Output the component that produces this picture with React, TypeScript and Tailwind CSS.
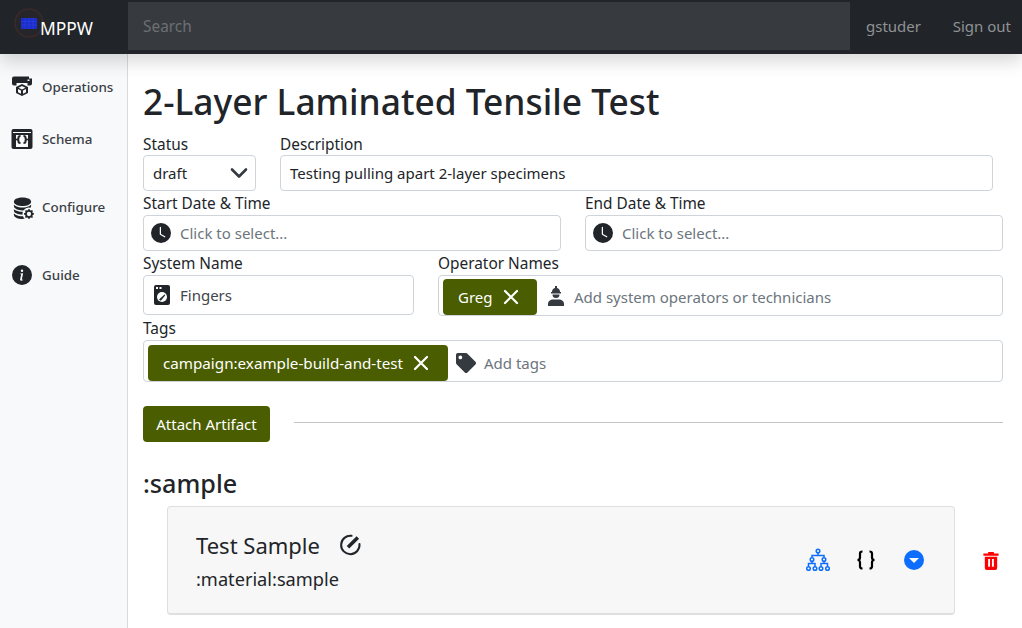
import { BsClockFill, BsDatabaseFillGear, BsInfoCircleFill } from "react-icons/bs";
import { FaTag } from "react-icons/fa";

const font = "font-['Noto_Sans',sans-serif]";
const labelCls = "block text-[15.4px] leading-[17px] text-[#212529]";
const boxCls = "flex items-center bg-white border border-[#ced4da] rounded-[4px]";

const LogoIcon = () => (
  <svg viewBox="0 0 30 30" className="w-[30px] h-[30px]">
    <circle cx="15" cy="15" r="14" fill="#26262a" stroke="#3a2a2a" strokeWidth="1.500" />
    <rect x="7" y="10" width="16" height="11" fill="#1c2ec9" />
    <path d="M7 13.500h16M7 17h16M11 10v11M15 10v11M19 10v11" stroke="#2b3fe0" strokeWidth="0.600" />
  </svg>
);

const OperationsIcon = () => (
  <svg viewBox="0 1.500 22 22" className="w-[22px] h-[22px]" fill="#212529">
    <path d="M1 4a2 2 0 0 1 2-2h15v2h3v5a2 2 0 0 1-2 2h-2.500v-2.500h-11v2.500H3a2 2 0 0 1-2-2z" />
    <rect x="16.500" y="5" width="2" height="1.500" fill="#f8f9fa" />
    <path d="M11 9.500l6 3v6l-6 3-6-3v-6z" />
    <path d="M11 11.500l3.500 1.700-3.500 1.800-3.500-1.800zM7 14.500l3 1.500v3.300l-3-1.500zM15 14.500l-3 1.500v3.300l3-1.500z" fill="#f8f9fa" />
  </svg>
);

const SchemaIcon = () => (
  <svg viewBox="0 0 22 22" className="w-[22px] h-[22px]">
    <rect x="0.500" y="1" width="21" height="20" rx="2" fill="#212529" />
    <rect x="2" y="4" width="18" height="1" fill="#f8f9fa" />
    <rect x="5" y="7" width="12" height="12" fill="#f8f9fa" />
    <path d="M9.500 8c-1.500 0-2 .5-2 1.500v.8c0 .7-.4 1-1 1.200.6.200 1 .5 1 1.200v.8c0 1 .5 1.500 2 1.500M12.500 8c1.500 0 2 .5 2 1.500v.8c0 .7.4 1 1 1.200-.6.200-1 .5-1 1.200v.8c0 1-.5 1.500-2 1.500" fill="none" stroke="#212529" strokeWidth="2" />
  </svg>
);

const ChevronIcon = () => (
  <svg viewBox="0 0 18 12" className="w-[18px] h-3" fill="none" stroke="#343a40" strokeWidth="2.600" strokeLinecap="round" strokeLinejoin="round">
    <path d="M2 2.500l7 7 7-7" />
  </svg>
);

const WasherIcon = () => (
  <svg viewBox="0 0 16 20" className="w-4 h-5">
    <rect x="0" y="0" width="16" height="20" rx="2" fill="#212529" />
    <rect x="2" y="2" width="2" height="2" fill="#fff" />
    <rect x="5.500" y="2" width="2" height="2" fill="#fff" />
    <circle cx="8" cy="12" r="5" fill="#fff" />
    <path d="M5 14.500l5.500-5 .8.800-4.500 5.500z" fill="#212529" />
  </svg>
);

const WorkerIcon = () => (
  <svg viewBox="0 0 18 20" className="w-[18px] h-5" fill="#343a40">
    <path d="M8 0h2v2c2 .5 3 2 3 4h1v1.500H4V6h1c0-2 1-3.500 3-4z" />
    <path d="M5.500 8.500h7a3.500 3.500 0 0 1-7 0z" />
    <path d="M1 20v-2c0-3 2.500-4.500 5-4.500h6c2.500 0 5 1.500 5 4.500v2z" />
  </svg>
);

const EditIcon = () => (
  <svg viewBox="0 0 22 22" className="w-[23px] h-[23px]" fill="none" stroke="#212529">
    <path d="M12 2.700A8.800 8.800 0 1 0 19.600 10.500" strokeWidth="1.900" strokeLinecap="round" />
    <path d="M8.600 13.700L18 4.300" strokeWidth="3.400" />
  </svg>
);

const TreeIcon = () => (
  <svg viewBox="0 0 24 24" className="w-6 h-6" fill="none" stroke="#0d6efd" strokeWidth="1.500">
    <circle cx="12" cy="3" r="1.800" />
    <circle cx="6" cy="11.500" r="1.800" />
    <circle cx="18" cy="11.500" r="1.800" />
    <circle cx="2.500" cy="20.500" r="1.800" />
    <circle cx="9" cy="20.500" r="1.800" />
    <circle cx="15" cy="20.500" r="1.800" />
    <circle cx="21.500" cy="20.500" r="1.800" />
    <path d="M12 5v2.500M6 9.500V7.500h12v2M6 13.500v2M2.500 18.500v-3h6.500v3M18 13.500v2M15 18.500v-3h6.500v3" />
  </svg>
);

const BracesIcon = () => (
  <svg viewBox="0 0 20 20" className="w-5 h-5" fill="none" stroke="#000" strokeWidth="2.200">
    <path d="M6.500 1.500C4.500 1.500 4 2.500 4 3.500v4c0 1.500-1 2.500-2.500 2.500C3 10 4 11 4 12.500v4c0 1 .5 2 2.500 2M13.500 1.500c2 0 2.500 1 2.500 2v4c0 1.500 1 2.500 2.500 2.500-1.500 0-2.500 1-2.500 2.500v4c0 1-.5 2-2.500 2" />
  </svg>
);

const CaretCircle = () => (
  <svg viewBox="0 0 20 20" className="w-5 h-5">
    <circle cx="10" cy="10" r="10" fill="#0d6efd" />
    <path d="M5 8h10l-5 5z" fill="#fff" />
  </svg>
);

const TrashIcon = () => (
  <svg viewBox="0 0 16 20" className="w-4 h-[19px]" fill="#ff0000">
    <path d="M0 2.500h5V1h6v1.500h5V5H0z" />
    <path d="M1.500 6h13v12a2 2 0 0 1-2 2h-9a2 2 0 0 1-2-2zM5 8.500v8h2v-8zM9 8.500v8h2v-8z" fillRule="evenodd" />
  </svg>
);

const CloseX = () => (
  <svg viewBox="0 0 16 16" className="w-4 h-4" stroke="#fff" strokeWidth="2.200" strokeLinecap="round">
    <path d="M2 2l12 12M14 2L2 14" />
  </svg>
);

const SideItem = ({ icon, label, className }: { icon: React.ReactNode; label: string; className: string }) => (
  <div className={`flex items-center h-[24px] pl-[11px] ${className}`}>
    <div className="w-[31px] flex items-center">{icon}</div>
    <span className="text-[13.4px] font-medium text-[#3b4046]">{label}</span>
  </div>
);

export default function App() {
  return (
    <div className={`${font} w-[1022px] h-[628px] overflow-hidden bg-white text-[#212529] flex flex-col`}>
      <header className="relative z-10 h-[54px] shrink-0 bg-[#212529] flex shadow-[0_8px_16px_rgba(0,0,0,0.15)]">
        <div className="relative w-[128px] shrink-0">
          <div className="absolute left-[14px] top-[8px]"><LogoIcon /></div>
          <span className="absolute left-[40px] top-[16px] text-[17.4px] leading-[24px] text-white">MPPW</span>
        </div>
        <div className="w-[722px] h-[48px] mt-[2px] bg-[#373a3e] flex items-center px-[15px]">
          <span className="pt-[2px] text-[15.4px] text-[#6c7074]">Search</span>
        </div>
        <div className="flex-1 flex items-center justify-between pl-[16px] pr-[11px] pb-[2px] text-[15px] text-[#8f9295]">
          <span>gstuder</span>
          <span>Sign out</span>
        </div>
      </header>

      <div className="flex flex-1 min-h-0">
        <aside className="w-[128px] shrink-0 bg-[#f8f9fa] border-r border-[#d8dadc] pt-[21px]">
          <SideItem className="" icon={<OperationsIcon />} label="Operations" />
          <SideItem className="mt-[28px]" icon={<SchemaIcon />} label="Schema" />
          <SideItem className="mt-[44px]" icon={<BsDatabaseFillGear size={23} color="#212529" />} label="Configure" />
          <SideItem className="mt-[44px]" icon={<span className="ml-[1px]"><BsInfoCircleFill size={20} color="#212529" /></span>} label="Guide" />
        </aside>

        <main className="flex-1 pl-[15px] pr-[19px] min-w-0">
          <h1 className="text-[35.3px] leading-[44px] font-medium mt-[25px]">2-Layer Laminated Tensile Test</h1>

          <div className="flex gap-[24px] mt-[13px]">
            <div className="w-[113px]">
              <label className={labelCls}>Status</label>
              <div className={`${boxCls} h-[36px] mt-[2px] pl-[9px] pr-[7px] justify-between`}>
                <span className="text-[15px]">draft</span>
                <ChevronIcon />
              </div>
            </div>
            <div className="w-[713px]">
              <label className={labelCls}>Description</label>
              <div className={`${boxCls} h-[36px] mt-[2px] px-[9px]`}>
                <span className="text-[15px]">Testing pulling apart 2-layer specimens</span>
              </div>
            </div>
          </div>

          <div className="flex gap-[24px] mt-[4px]">
            <div className="flex-1">
              <label className={labelCls}>Start Date &amp; Time</label>
              <div className={`${boxCls} h-[36px] mt-[3px] px-[7px]`}>
                <BsClockFill size={20} color="#212529" />
                <span className="ml-[9px] text-[15px] text-[#6c757d]">Click to select...</span>
              </div>
            </div>
            <div className="flex-1">
              <label className={labelCls}>End Date &amp; Time</label>
              <div className={`${boxCls} h-[36px] mt-[3px] px-[7px]`}>
                <BsClockFill size={20} color="#212529" />
                <span className="ml-[9px] text-[15px] text-[#6c757d]">Click to select...</span>
              </div>
            </div>
          </div>

          <div className="flex gap-[24px] mt-[4px]">
            <div className="w-[271px]">
              <label className={labelCls}>System Name</label>
              <div className={`${boxCls} h-[40px] mt-[3px] pl-[10px]`}>
                <WasherIcon />
                <span className="ml-[10px] text-[15px] text-[#3f454b]">Fingers</span>
              </div>
            </div>
            <div className="flex-1">
              <label className={labelCls}>Operator Names</label>
              <div className={`${boxCls} h-[41px] mt-[3px] pl-[4px]`}>
                <div className="h-[36px] w-[94px] mt-[3px] bg-[#4a5d00] rounded-[4px] flex items-center pl-[15px] gap-[10px] text-white text-[15px]">
                  Greg <CloseX />
                </div>
                <span className="ml-[10px]"><WorkerIcon /></span>
                <span className="ml-[9px] pt-[3px] text-[15px] text-[#6c757d]">Add system operators or technicians</span>
              </div>
            </div>
          </div>

          <div className="mt-[4px]">
            <label className={labelCls}>Tags</label>
            <div className={`${boxCls} h-[42px] mt-[3px] pl-[4px]`}>
              <div className="h-[36px] w-[300px] mt-[4px] bg-[#4a5d00] rounded-[4px] flex items-center pl-[15px] gap-[10px] text-white text-[15.2px]">
                campaign:example-build-and-test <CloseX />
              </div>
              <FaTag size={20} color="#343a40" className="ml-[8px] mt-[4px]" />
              <span className="ml-[8px] pt-[4px] text-[15px] text-[#6c757d]">Add tags</span>
            </div>
          </div>

          <div className="flex items-center mt-[24px]">
            <button className="h-[36px] w-[127px] bg-[#4a5d00] rounded-[4px] text-white text-[15px]">Attach Artifact</button>
            <div className="flex-1 ml-[24px] border-t border-[#c4c4c4] -mt-[3px]" />
          </div>

          <h2 className="text-[25.2px] leading-[32px] font-medium mt-[25px]">:sample</h2>

          <div className="ml-[24px] w-[860px] mt-[7px] flex items-center">
            <div className="w-[788px] h-[109px] shrink-0 bg-[#f7f7f7] border border-[#dfdfdf] border-b-2 rounded-[4px] flex items-center pl-[28px] pr-[30px]">
              <div className="flex-1 pt-[1px]">
                <div className="flex items-center">
                  <span className="text-[22px] leading-[30px]">Test Sample</span>
                  <span className="ml-[19px]"><EditIcon /></span>
                </div>
                <div className="text-[18.2px] leading-[26px] mt-[6px]">:material:sample</div>
              </div>
              <div className="flex items-center">
                <TreeIcon />
                <span className="ml-[26px]"><BracesIcon /></span>
                <span className="ml-[28px]"><CaretCircle /></span>
              </div>
            </div>
            <div className="ml-[28px]"><TrashIcon /></div>
          </div>
        </main>
      </div>
    </div>
  );
}
